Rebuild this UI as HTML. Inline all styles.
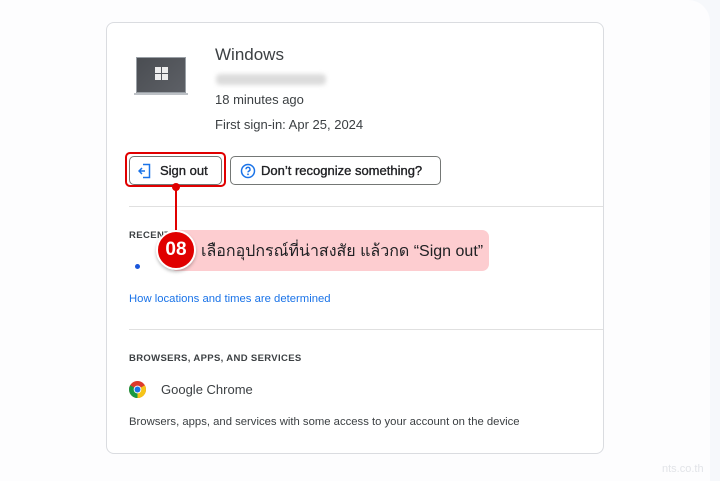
<!DOCTYPE html>
<html><head><meta charset="utf-8"><style>
*{margin:0;padding:0;box-sizing:border-box}
body{width:720px;height:481px;background:#f6f8fb;font-family:"Liberation Sans",Arial,sans-serif;position:relative;overflow:hidden;color:#202124}
.panel{position:absolute;left:0;top:0;width:710px;height:481px;background:#fdfdfe;border-top-right-radius:22px}
.card{position:absolute;left:106px;top:22px;width:498px;height:432px;border:1px solid #dadce0;border-radius:8px;background:#fff}
.a{position:absolute;white-space:nowrap}
.hr{position:absolute;left:129px;width:474px;height:1px;background:#e0e0e0}
.btn{position:absolute;height:29px;border:1px solid #747775;border-radius:5px;font-size:13px;color:#202124;line-height:27px;-webkit-text-stroke:.35px #202124}
.blur{position:absolute;background:#dcdcdc;filter:blur(2px);border-radius:4px}
</style></head><body>
<div class="panel"></div>
<div class="card"></div>
<div class="a" style="left:136px;top:57px;width:50px;height:36px;background:linear-gradient(135deg,#4a4d52,#5d6066);border:1px solid #9aa0a6"></div>
<div class="a" style="left:134px;top:93px;width:54px;height:2px;background:#bdc1c6"></div>
<div class="a" style="left:155px;top:67px;width:6px;height:6px;background:#eee"></div>
<div class="a" style="left:162px;top:67px;width:6px;height:6px;background:#eee"></div>
<div class="a" style="left:155px;top:74px;width:6px;height:6px;background:#eee"></div>
<div class="a" style="left:162px;top:74px;width:6px;height:6px;background:#eee"></div>
<div class="a" style="left:215px;top:45px;font-size:17px;color:#3c4043">Windows</div>
<div class="blur" style="left:216px;top:74px;width:110px;height:11px"></div>
<div class="a" style="left:215px;top:92px;font-size:13px;color:#3c4043">18 minutes ago</div>
<div class="a" style="left:215px;top:117px;font-size:13px;color:#3c4043">First sign-in: Apr 25, 2024</div>
<div class="a" style="left:125px;top:152px;width:101px;height:35px;border:2px solid #e00000;border-radius:5px"></div>
<div class="btn" style="left:129px;top:156px;width:93px"><svg style="position:absolute;left:8px;top:6px" width="14" height="16" viewBox="0 0 14 16"><path d="M5 1.5h6.5v13H5" fill="none" stroke="#1a73e8" stroke-width="1.5"/><path d="M1 8h6M4 5l-3 3 3 3" fill="none" stroke="#1a73e8" stroke-width="1.5"/></svg><span style="position:absolute;left:30px">Sign out</span></div>
<div class="btn" style="left:230px;top:156px;width:211px"><svg style="position:absolute;left:9px;top:6px" width="16" height="16" viewBox="0 0 16 16"><circle cx="8" cy="8" r="6.5" fill="none" stroke="#1a73e8" stroke-width="1.5"/><path d="M6 6.3a2 2 0 1 1 2.7 1.9c-.5.2-.7.6-.7 1.2" fill="none" stroke="#1a73e8" stroke-width="1.4"/><circle cx="8" cy="11.3" r=".9" fill="#1a73e8"/></svg><span style="position:absolute;left:30px">Don’t recognize something?</span></div>
<div class="hr" style="top:206px"></div>
<div class="a" style="left:129px;top:230px;font-size:9.5px;font-weight:bold;letter-spacing:.4px;color:#3c4043">RECENT</div>
<div class="a" style="left:135px;top:264px;width:5px;height:5px;border-radius:50%;background:#1a56db"></div>
<div class="a" style="left:129px;top:293px;font-size:11.3px;color:#1a73e8">How locations and times are determined</div>
<div class="a" style="left:175px;top:186px;width:2px;height:48px;background:#e00000"></div>
<div class="a" style="left:172px;top:183px;width:8px;height:8px;border-radius:50%;background:#e00000"></div>
<div class="a" style="left:170px;top:230px;width:319px;height:41px;background:#fdcdd0;border-radius:7px"></div>
<div class="a" style="left:156px;top:230px;width:40px;height:40px;border-radius:50%;background:#e00000;border:2px solid #fff;box-shadow:0 2px 3px rgba(0,0,0,.25);color:#fff;font-weight:bold;font-size:19px;line-height:36px;text-align:center">08</div>
<div class="a" style="left:201px;top:241px;font-size:16px;color:#202124;font-family:'Liberation Sans','Noto Sans CJK SC',sans-serif;line-height:22px">เลือกอุปกรณ์ที่น่าสงสัย แล้วกด “Sign out”</div>
<div class="hr" style="top:329px"></div>
<div class="a" style="left:129px;top:353px;font-size:9.5px;font-weight:bold;letter-spacing:.35px;color:#3c4043">BROWSERS, APPS, AND SERVICES</div>
<svg class="a" style="left:129px;top:381px" width="17" height="17" viewBox="0 0 16 16"><circle cx="8" cy="8" r="8" fill="#dd3b2c"/><path d="M8 8 L1.1 4 A8 8 0 0 0 8 16 Z" fill="#199a44"/><path d="M8 8 L8 16 A8 8 0 0 0 14.9 4 Z" fill="#f5c518"/><circle cx="8" cy="8" r="3.6" fill="#fff"/><circle cx="8" cy="8" r="2.8" fill="#1a73e8"/></svg>
<div class="a" style="left:161px;top:382px;font-size:13px;color:#3c4043">Google Chrome</div>
<div class="a" style="left:129px;top:416px;font-size:11.3px;color:#3c4043">Browsers, apps, and services with some access to your account on the device</div>
<div class="a" style="left:662px;top:463px;font-size:11px;color:#e2e4e8">nts.co.th</div>
</body></html>
